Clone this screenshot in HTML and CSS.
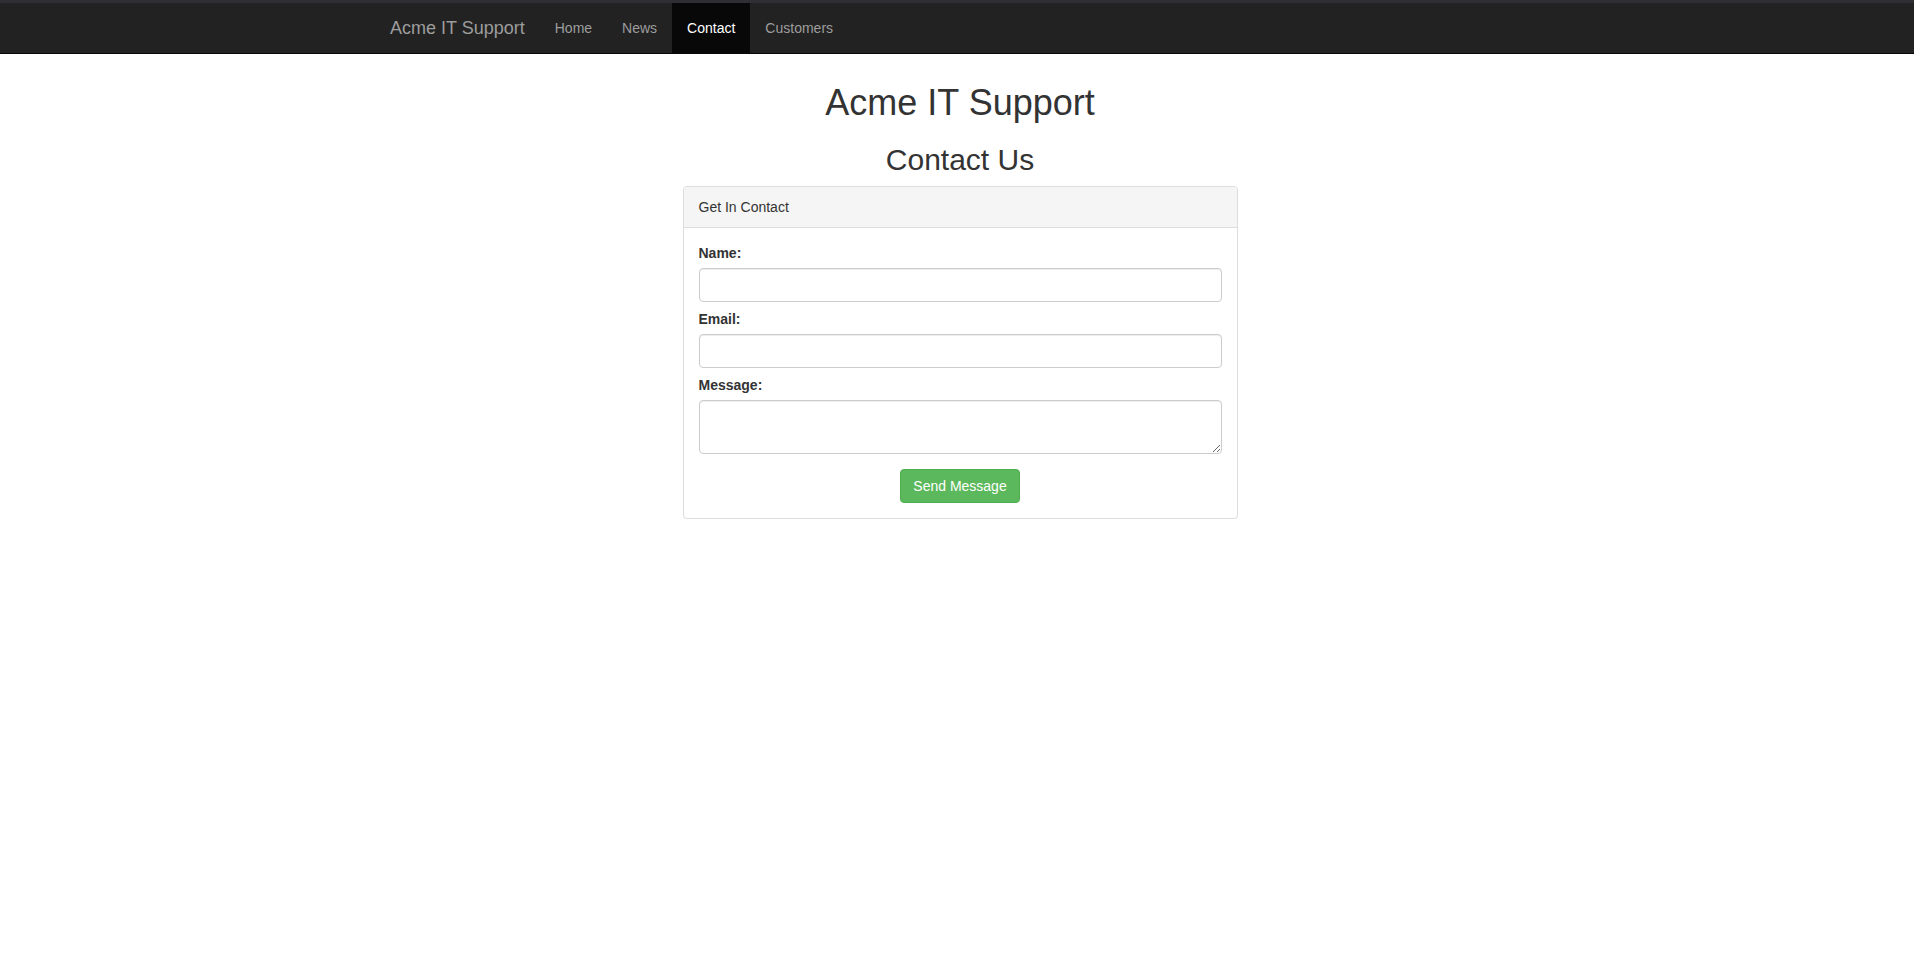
FILE: index.html
```html
<!DOCTYPE html>
<html lang="en">
<head>
<meta charset="utf-8">
<title>Acme IT Support - Contact</title>
<link rel="stylesheet" href="styles.css">
</head>
<body>
<nav class="navbar">
  <div class="container navbar-inner">
    <a class="brand" href="#">Acme IT Support</a>
    <ul class="nav">
      <li><a href="#">Home</a></li>
      <li><a href="#">News</a></li>
      <li class="active"><a href="#">Contact</a></li>
      <li><a href="#">Customers</a></li>
    </ul>
  </div>
</nav>
<main class="container main">
  <h1 class="title">Acme IT Support</h1>
  <h2 class="subtitle">Contact Us</h2>
  <div class="panel">
    <div class="panel-heading">Get In Contact</div>
    <form class="panel-body">
      <label class="field-label" for="name">Name:</label>
      <input class="control" id="name" type="text">
      <label class="field-label" for="email">Email:</label>
      <input class="control" id="email" type="email">
      <label class="field-label" for="message">Message:</label>
      <textarea class="control textarea" id="message" rows="2"></textarea>
      <div class="actions">
        <button class="btn-success" type="button">Send Message</button>
      </div>
    </form>
  </div>
</main>
</body>
</html>
```
FILE: styles.css
```css
html {
  overflow-x: hidden;
}
body {
  margin: 0;
  min-width: 1920px;
  font-family: "Liberation Sans", Arial, sans-serif;
  font-size: 14px;
  line-height: 20px;
  color: #333;
  background: #fff;
}
.container {
  width: 1170px;
  margin: 0 auto;
  padding: 0 15px;
  box-sizing: border-box;
}
.navbar {
  background: #222;
  border-top: 3px solid #2e2e34;
  border-bottom: 1px solid #080808;
}
.navbar-inner {
  display: flex;
  align-items: stretch;
  height: 50px;
}
.brand {
  display: block;
  margin-left: -15px;
  padding: 15px;
  font-size: 18px;
  line-height: 20px;
  color: #9d9d9d;
  text-decoration: none;
}
.nav {
  display: flex;
  list-style: none;
  margin: 0;
  padding: 0;
}
.nav a {
  display: block;
  padding: 15px;
  line-height: 20px;
  color: #9d9d9d;
  text-decoration: none;
}
.nav .active a {
  background: #080808;
  color: #fff;
}
.main {
  padding-top: 9px;
}
.title {
  margin: 20px 0 10px;
  font-size: 36px;
  line-height: 1.1;
  font-weight: 500;
  text-align: center;
}
.subtitle {
  margin: 20px 0 10px;
  font-size: 30px;
  line-height: 1.1;
  font-weight: 500;
  text-align: center;
}
.panel {
  width: 555px;
  margin: 0 auto;
  border: 1px solid #ddd;
  border-radius: 4px;
  box-shadow: 0 1px 1px rgba(0,0,0,.05);
  box-sizing: border-box;
}
.panel-heading {
  padding: 10px 15px;
  background: #f5f5f5;
  border-bottom: 1px solid #ddd;
  border-radius: 3px 3px 0 0;
}
.panel-body {
  display: flex;
  flex-direction: column;
  padding: 15px;
  margin: 0;
}
.field-label {
  font-weight: bold;
  margin-bottom: 5px;
}
.control {
  display: block;
  width: 100%;
  height: 34px;
  margin: 0 0 7px;
  padding: 6px 12px;
  box-sizing: border-box;
  font-family: inherit;
  font-size: 14px;
  line-height: 20px;
  color: #555;
  background: #fff;
  border: 1px solid #ccc;
  border-radius: 4px;
  box-shadow: inset 0 1px 1px rgba(0,0,0,.075);
}
.textarea {
  height: 54px;
  margin-bottom: 0;
  resize: vertical;
}
.actions {
  display: flex;
  justify-content: center;
  margin-top: 15px;
}
.btn-success {
  padding: 6px 12px;
  font-family: inherit;
  font-size: 14px;
  line-height: 20px;
  color: #fff;
  background: #5cb85c;
  border: 1px solid #4cae4c;
  border-radius: 4px;
  cursor: pointer;
}
```
